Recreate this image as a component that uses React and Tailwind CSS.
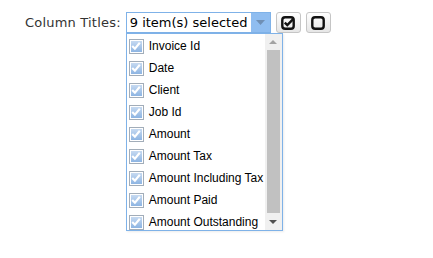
import { useState } from 'react'

const columns = [
  'Invoice Id',
  'Date',
  'Client',
  'Job Id',
  'Amount',
  'Amount Tax',
  'Amount Including Tax',
  'Amount Paid',
  'Amount Outstanding',
]

const CheckBox = ({ checked }) => (
  <span className="w-[15px] h-[15px] border border-[#a2adb9] p-[1px] shrink-0">
    <span className="w-full h-full bg-gradient-to-b from-[#c6daf1] to-[#8db4e2] flex items-center justify-center">
      {checked && (
        <svg width="10" height="10" viewBox="0 0 10 10">
          <path d="M1.2 5 L3.9 7.6 L8.8 1.8" fill="none" stroke="#ffffff" strokeWidth="2.1" />
        </svg>
      )}
    </span>
  </span>
)

const App = () => {
  const [selected] = useState(columns.map(() => true))

  return (
    <div className="w-[433px] h-[258px] bg-white relative" style={{ fontFamily: '"Liberation Sans", Arial, sans-serif' }}>
      <div className="flex items-start pt-[12px] pl-[25px]">
        {/* label */}
        <span className="text-[13px] text-[#333] leading-[21px] mr-[5px] tracking-[0.2px] font-['DejaVu_Sans',sans-serif]">
          Column Titles:
        </span>

        {/* select */}
        <div className="relative">
          <div className="flex h-[21px] w-[145px] border border-[#7fb2e8] bg-white">
            <span className="flex-1 text-[13px] text-black leading-[19px] pl-[3px] whitespace-nowrap overflow-hidden font-['DejaVu_Sans',sans-serif]">
              9 item(s) selected
            </span>
            <span className="w-[19px] bg-[#8fbdf0] flex items-center justify-center">
              <svg width="9" height="5" viewBox="0 0 9 5">
                <path d="M0 0 L9 0 L4.5 5 Z" fill="#6f8fb4" />
              </svg>
            </span>
          </div>

          {/* dropdown */}
          <div className="absolute left-0 top-[21px] w-[157px] h-[198px] border border-[#7fb2e8] bg-white flex shadow-[1px_1px_2px_rgba(0,0,0,0.08)]">
            <ul className="flex-1 pt-[1px]">
              {columns.map((c, i) => (
                <li key={c} className="flex items-center h-[22px] pl-[2px] gap-[5px]">
                  <CheckBox checked={selected[i]} />
                  <span className="text-[12px] text-black whitespace-nowrap">{c}</span>
                </li>
              ))}
            </ul>
            {/* scrollbar */}
            <div className="w-[17px] bg-[#f0f0f0] flex flex-col items-center">
              <div className="h-[16px] flex items-center justify-center">
                <svg width="8" height="4" viewBox="0 0 8 4">
                  <path d="M0 4 L8 4 L4 0 Z" fill="#a3a3a3" />
                </svg>
              </div>
              <div className="w-[13px] flex-1 bg-[#c1c1c1]" />
              <div className="h-[17px] flex items-center justify-center">
                <svg width="8" height="4" viewBox="0 0 8 4">
                  <path d="M0 0 L8 0 L4 4 Z" fill="#505050" />
                </svg>
              </div>
            </div>
          </div>
        </div>

        {/* buttons */}
        <button className="ml-[5px] w-[25px] h-[21px] border border-[#c5c5c5] rounded-[3px] bg-gradient-to-b from-[#ffffff] to-[#e6e6e6] flex items-center justify-center">
          <svg width="14" height="14" viewBox="0 0 14 14">
            <rect x="1.3" y="1.3" width="11.4" height="11.4" rx="2.8" fill="none" stroke="#111" strokeWidth="2.4" />
            <path d="M3.8 6.6 L6.3 9 L12.4 2.8" fill="none" stroke="#111" strokeWidth="2.4" />
          </svg>
        </button>
        <button className="ml-[5px] w-[25px] h-[21px] border border-[#c5c5c5] rounded-[3px] bg-gradient-to-b from-[#ffffff] to-[#e6e6e6] flex items-center justify-center">
          <svg width="14" height="14" viewBox="0 0 14 14">
            <rect x="1.3" y="1.3" width="11.4" height="11.4" rx="2.8" fill="none" stroke="#111" strokeWidth="2.4" />
          </svg>
        </button>
      </div>
    </div>
  )
}

export default App
